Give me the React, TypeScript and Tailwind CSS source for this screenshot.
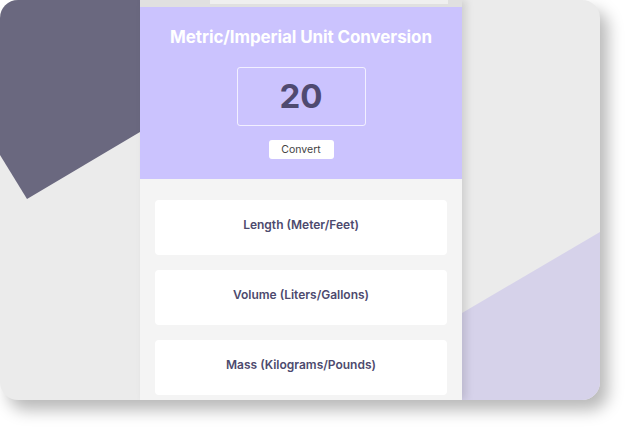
import React from 'react';

const units = ['Length (Meter/Feet)', 'Volume (Liters/Gallons)', 'Mass (Kilograms/Pounds)'];

export default function App() {
  return (
    <div className="w-[630px] h-[430px] bg-white overflow-hidden" style={{ fontFamily: 'Inter, "Noto Sans", sans-serif' }}>
      <div className="relative w-[600px] h-[400px] rounded-[18px] overflow-hidden bg-[#ebebeb] shadow-[8px_10px_16px_rgba(0,0,0,0.28)]">
        {/* backdrop shapes */}
        <svg className="absolute inset-0" width="600" height="400" viewBox="0 0 600 400">
          <polygon points="0,0 140,0 140,132 27,199 0,155" fill="#6a687f" />
          <polygon points="462,313 600,232 600,400 462,400" fill="#d6d2ea" />
        </svg>

        <div className="relative ml-[140px] w-[322px] h-[400px] flex flex-col shadow-[4px_0_8px_rgba(0,0,0,0.12)]">
          <div className="h-[7px] bg-[#e0e0e0] pl-[70px] pr-[14px]">
            <div className="h-[4px] bg-[#efefef]" />
          </div>

          <div className="h-[172px] bg-[#cbc3fe] flex flex-col items-center">
            <h1 className="mt-[19px] text-[17px] leading-[22px] font-bold text-white tracking-[-0.1px]">
              Metric/Imperial Unit Conversion
            </h1>
            <div className="mt-[19px] w-[129px] h-[59px] rounded-[3px] border border-white/75 flex items-center justify-center">
              <span className="text-[33px] leading-none font-bold text-[#4f4a70]">20</span>
            </div>
            <button className="mt-[14px] w-[65px] h-[19px] rounded-[3px] bg-white text-[10.5px] text-[#444] flex items-center justify-center">
              Convert
            </button>
          </div>

          <div className="flex-1 bg-[#f4f4f4] px-[15px] pt-[21px] flex flex-col gap-[15px]">
            {units.map((u) => (
              <div key={u} className="h-[55px] shrink-0 rounded-[4px] bg-white flex justify-center pt-[17px]">
                <span className="text-[12px] leading-[16px] font-semibold text-[#4d4a6e]">{u}</span>
              </div>
            ))}
          </div>
        </div>
      </div>
    </div>
  );
}
